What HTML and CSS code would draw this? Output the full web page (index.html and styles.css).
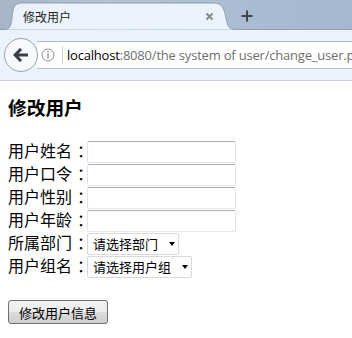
FILE: index.html
```html
<!DOCTYPE html>
<html lang="zh-CN">
<head>
    <meta charset="UTF-8">
    <meta name="viewport" content="width=device-width, initial-scale=1.0">
    <title>修改用户</title>
    <link rel="stylesheet" href="styles.css">
</head>
<body>
    <div class="browser">
        <div class="tabstrip">
            <svg class="tabshape" width="352" height="30" viewBox="0 0 352 30">
                <path d="M0 29.5 L4 29.5 C10 29.5 11 26 12 18 C13 8 14 3 22 3 L214 3 C222 3 224 8 226 18 C227.5 26 229 29.5 236 29.5 L352 29.5" fill="#eaf2fb" stroke="#8d9fb5" stroke-width="1"/>
            </svg>
            <div class="tabrow">
                <span class="tab-title">修改用户</span>
                <svg class="tab-close" width="9" height="9" viewBox="0 0 9 9">
                    <path d="M1.5 1.5 L7.5 7.5 M7.5 1.5 L1.5 7.5" stroke="#8a8a8a" stroke-width="2"/>
                </svg>
                <svg class="tab-new" width="12" height="12" viewBox="0 0 12 12">
                    <path d="M6 0.5 V11.5 M0.5 6 H11.5" stroke="#3f4650" stroke-width="2"/>
                </svg>
            </div>
        </div>
        <div class="toolbar">
            <div class="back">
                <svg width="16" height="14" viewBox="0 0 16 14">
                    <path d="M8 1 L2 7 L8 13 M2.5 7 H15" stroke="#3a3f46" stroke-width="3" fill="none" stroke-linejoin="miter"/>
                </svg>
            </div>
            <div class="urlbar">
                <svg class="info" width="14" height="14" viewBox="0 0 14 14">
                    <circle cx="7" cy="7" r="6" fill="none" stroke="#8c8c8c" stroke-width="1"/>
                    <rect x="6.4" y="3" width="1.3" height="1.4" fill="#8c8c8c"/>
                    <rect x="6.4" y="5.6" width="1.3" height="5" fill="#8c8c8c"/>
                </svg>
                <span class="divider"></span>
                <span class="url"><span class="host">localhost</span>:8080/the system of user/change_user.php</span>
            </div>
        </div>
        <div class="page">
            <h3>修改用户</h3>
            <form class="user-form">
                <div class="row">
                    <label class="label">用户姓名<span class="colon">：</span></label>
                    <input class="text" type="text">
                </div>
                <div class="row">
                    <label class="label">用户口令<span class="colon">：</span></label>
                    <input class="text" type="password">
                </div>
                <div class="row">
                    <label class="label">用户性别<span class="colon">：</span></label>
                    <input class="text" type="text">
                </div>
                <div class="row">
                    <label class="label">用户年龄<span class="colon">：</span></label>
                    <input class="text" type="text">
                </div>
                <div class="row">
                    <label class="label">所属部门<span class="colon">：</span></label>
                    <span class="select-wrap">
                        <select class="select">
                            <option>请选择部门</option>
                        </select>
                        <span class="arrow"></span>
                    </span>
                </div>
                <div class="row">
                    <label class="label">用户组名<span class="colon">：</span></label>
                    <span class="select-wrap">
                        <select class="select">
                            <option>请选择用户组</option>
                        </select>
                        <span class="arrow"></span>
                    </span>
                </div>
                <button class="submit" type="button">修改用户信息</button>
            </form>
        </div>
    </div>
</body>
</html>
```

FILE: styles.css
```css
*{
    box-sizing: border-box;
}
html, body{
    margin: 0;
    padding: 0;
    background: #fff;
}
body{
    width: 352px;
    height: 338px;
    overflow: hidden;
    font-family: "Noto Sans CJK SC", "Noto Sans", sans-serif;
}
.browser{
    display: flex;
    flex-direction: column;
    height: 338px;
}

/* tab strip */
.tabstrip{
    display: grid;
    height: 30px;
    background: linear-gradient(90deg, #a7b5c7 0%, #b3c3d6 30%, #a9bcd2 70%, #a5b8cf 100%);
}
.tabshape, .tabrow{
    grid-area: 1 / 1;
}
.tabrow{
    display: flex;
    align-items: center;
    padding-top: 2px;
}
.tab-title{
    margin-left: 23px;
    width: 182px;
    font-size: 12px;
    color: #1e1e1e;
}
.tab-new{
    margin-left: 27px;
}

/* toolbar */
.toolbar{
    display: flex;
    align-items: center;
    height: 51px;
    padding-left: 4px;
    background: #eaf2fb;
    border-bottom: 1px solid #c6d3e3;
}
.back{
    display: flex;
    align-items: center;
    justify-content: center;
    flex: none;
    width: 34px;
    height: 34px;
    border-radius: 50%;
    border: 1px solid #98a4b3;
    background: #f7f9fc;
    position: relative;
    z-index: 1;
}
.urlbar{
    display: flex;
    align-items: center;
    flex: 1;
    height: 28px;
    margin-left: -1px;
    background: #fff;
    border: 1px solid #b2bcc8;
    border-left: none;
    border-right: none;
    overflow: hidden;
    white-space: nowrap;
}
.info{
    margin-left: 4px;
    flex: none;
}
.divider{
    flex: none;
    width: 1px;
    height: 18px;
    margin-left: 7px;
    background: #d0d0d0;
}
.url{
    margin-left: 4px;
    font-family: "Open Sans", "Noto Sans", sans-serif;
    font-size: 13px;
    letter-spacing: -0.2px;
    color: #6f6f6f;
}
.host{
    color: #000;
}

/* page */
.page{
    flex: 1;
    padding: 0 8px;
    background: #fff;
}
h3{
    margin: 15px 0 22px;
    font-size: 18.72px;
    line-height: 22px;
    font-weight: bold;
    color: #000;
}
.user-form{
    display: flex;
    flex-direction: column;
    align-items: flex-start;
}
.row{
    display: flex;
    align-items: center;
    height: 23px;
}
.label{
    width: 79px;
    font-size: 16px;
    line-height: 23px;
    white-space: nowrap;
    color: #000;
    margin-top: -2px;
}
.colon{
    padding-left: 5px;
}
.text{
    width: 149px;
    height: 22px;
    margin: 0;
    padding: 1px 3px;
    border: 1px solid #e1e4ea;
    border-top-color: #abadb3;
    border-bottom-color: #e3e9ef;
    border-radius: 2px;
    background: #fff;
    font-size: 13px;
    outline: none;
}
.select-wrap{
    display: grid;
    align-items: center;
}
.select, .arrow{
    grid-area: 1 / 1;
}
.select{
    appearance: none;
    -webkit-appearance: none;
    height: 22px;
    margin: 0;
    padding: 0 19px 0 5px;
    border: 1px solid #d9d9d9;
    border-radius: 2px;
    background: #fff;
    font-family: "Noto Sans CJK SC", sans-serif;
    font-size: 13px;
    color: #000;
}
.arrow{
    justify-self: end;
    width: 0;
    height: 0;
    margin-right: 4px;
    border-left: 3.5px solid transparent;
    border-right: 3.5px solid transparent;
    border-top: 4px solid #000;
    pointer-events: none;
}
.submit{
    margin-top: 22px;
    height: 24px;
    padding: 0 10px;
    border: 1px solid #707070;
    border-radius: 3px;
    background: linear-gradient(#f2f2f2 0%, #ebebeb 50%, #dddddd 50%, #cfcfcf 100%);
    font-family: "Noto Sans CJK SC", sans-serif;
    font-size: 13px;
    color: #000;
}
```
